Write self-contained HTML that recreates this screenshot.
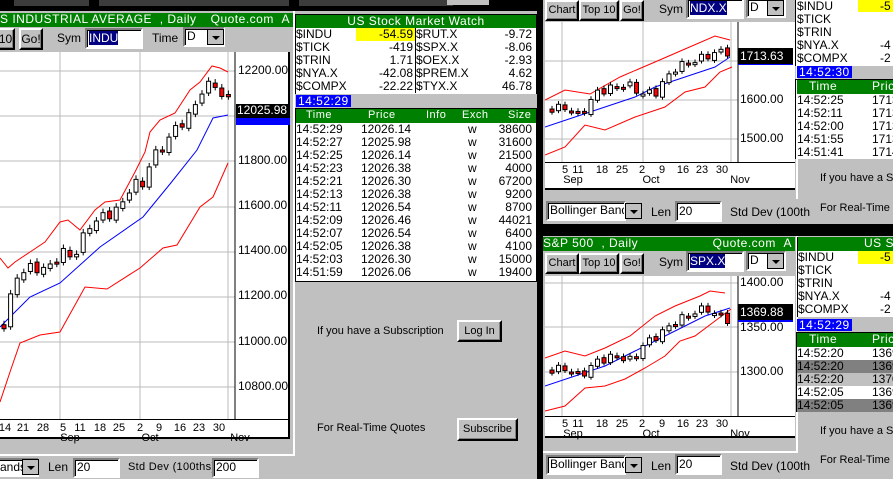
<!DOCTYPE html>
<html><head><meta charset="utf-8"><style>
*{margin:0;padding:0;box-sizing:border-box}
html{width:893px;height:479px;overflow:hidden}
body{width:893px;height:479px;overflow:hidden;background:#c0c0c0;position:relative;font-family:"Liberation Sans",sans-serif;font-size:11px;color:#000}
.a{position:absolute;white-space:nowrap;line-height:13px}
.g{position:absolute;background:#008000;color:#fff;line-height:13px;font-size:12px;letter-spacing:.5px;white-space:nowrap}
.btn{position:absolute;background:#c0c0c0;border:2px solid;border-color:#fff #000 #000 #fff;box-shadow:inset -1px -1px #808080;text-align:center;font-size:11px;white-space:nowrap;overflow:hidden}
.in{position:absolute;background:#fff;border:2px solid;border-color:#808080 #fff #fff #808080;box-shadow:inset 1px 1px #000;font-size:12px;padding-left:2px;white-space:nowrap;overflow:hidden}
.sel{position:absolute;background:#c0c0c0;border:1px solid #000;width:17px;height:16px}
.sel:after{content:"";position:absolute;left:4px;top:6px;border:4px solid transparent;border-top:4px solid #000}
.wh{position:absolute;background:#fff}
.hl{background:#000080;color:#fff}
.tb{position:absolute;background:#0000ff;color:#fff;font-size:12px;line-height:12px;padding:0 2px;letter-spacing:.5px;white-space:nowrap}
.d{position:absolute;width:20px;margin-left:-10px;text-align:center;line-height:11px}
</style></head><body>
<!-- top strip -->
<div class="a" style="left:0;top:0;width:537px;height:11px;background:#000"></div>
<div class="a" style="left:14px;top:0;width:75px;height:6px;background:#3c3c3c"></div>
<div class="a" style="left:99px;top:0;width:190px;height:6px;background:#3c3c3c"></div>
<div class="a" style="left:299px;top:0;width:154px;height:6px;background:#3c3c3c"></div>
<div class="a" style="left:447px;top:0;width:42px;height:5px;background:#c0c0c0"></div>

<!-- LEFT WINDOW -->
<div class="g" style="left:0;top:13px;width:293px;height:14px">S INDUSTRIAL AVERAGE &nbsp;, Daily<span style="position:absolute;right:3px">Quote.com &nbsp;A</span></div>
<div class="btn" style="left:-4px;top:28px;width:19px;height:22px;line-height:18px;font-size:12px">10</div>
<div class="btn" style="left:19px;top:28px;width:24px;height:22px;line-height:18px;font-size:12px">Go!</div>
<div class="a" style="left:57px;top:32px;font-size:12px">Sym</div>
<div class="in" style="left:85px;top:28px;width:58px;height:21px;line-height:16px"><span class="hl">INDU</span></div>
<div class="a" style="left:152px;top:32px;font-size:12px">Time</div>
<div class="in" style="left:183px;top:27px;width:42px;height:20px;line-height:15px">D</div>
<div class="sel" style="left:207px;top:29px"></div>
<div class="wh" style="left:0;top:52px;width:290px;height:387px;border-bottom:2px solid #000;border-right:2px solid #000"></div>
<div class="a" style="left:293px;top:11px;width:2px;height:445px;background:#fff"></div>
<div class="a" style="left:0;top:454px;width:295px;height:2px;background:#fff"></div>
<svg class="a" id="c1" style="left:0;top:52px" width="290" height="367"></svg>
<div class="a" style="left:238px;top:64px;font-size:12px">12200.00</div>
<div class="a" style="left:238px;top:154px;font-size:12px">11800.00</div>
<div class="a" style="left:238px;top:199px;font-size:12px">11600.00</div>
<div class="a" style="left:238px;top:244px;font-size:12px">11400.00</div>
<div class="a" style="left:238px;top:289px;font-size:12px">11200.00</div>
<div class="a" style="left:238px;top:335px;font-size:12px">11000.00</div>
<div class="a" style="left:238px;top:380px;font-size:12px">10800.00</div>
<div class="a" style="left:236px;top:104px;width:54px;height:14px;background:#000;color:#fff;font-size:12px;padding-left:1px">12025.98</div>
<div class="a" style="left:236px;top:118px;width:54px;height:7px;background:#0000ff"></div>
<div class="a" style="left:0;top:419px;width:290px;height:1px;background:#000"></div>
<div id="d1"></div>
<div class="in" style="left:-4px;top:458px;width:43px;height:19px;line-height:14px">ands</div>
<div class="sel" style="left:22px;top:459px"></div>
<div class="a" style="left:48px;top:461px;font-size:12px">Len</div>
<div class="in" style="left:73px;top:458px;width:47px;height:20px;line-height:15px">20</div>
<div class="a" style="left:128px;top:461px;font-size:11px;letter-spacing:.3px">Std Dev (100ths)</div>
<div class="in" style="left:212px;top:458px;width:47px;height:20px;line-height:15px">200</div>

<!-- MIDDLE PANEL -->
<div class="a" style="left:295px;top:14px;width:242px;height:268px;border:1px solid #000;background:#fff"></div>
<div class="g" style="left:296px;top:15px;width:240px;height:13px;text-align:center">US Stock Market Watch</div>
<div class="a" style="left:356px;top:28px;width:59px;height:13px;background:#ff0"></div>
<div class="a" style="left:415px;top:28px;width:1px;height:65px;background:#000"></div>
<div class="a" style="left:296px;top:28px;width:240px;line-height:13px;font-size:12px">
<div style="position:relative;height:13px">$INDU<span style="position:absolute;right:123px">-54.59</span><span style="position:absolute;left:120px">$RUT.X</span><span style="position:absolute;right:4px">-9.72</span></div>
<div style="position:relative;height:13px">$TICK<span style="position:absolute;right:123px">-419</span><span style="position:absolute;left:120px">$SPX.X</span><span style="position:absolute;right:4px">-8.06</span></div>
<div style="position:relative;height:13px">$TRIN<span style="position:absolute;right:123px">1.71</span><span style="position:absolute;left:120px">$OEX.X</span><span style="position:absolute;right:4px">-2.93</span></div>
<div style="position:relative;height:13px">$NYA.X<span style="position:absolute;right:123px">-42.08</span><span style="position:absolute;left:120px">$PREM.X</span><span style="position:absolute;right:4px">4.62</span></div>
<div style="position:relative;height:13px">$COMPX<span style="position:absolute;right:123px">-22.22</span><span style="position:absolute;left:120px">$TYX.X</span><span style="position:absolute;right:4px">46.78</span></div>
</div>
<div class="a" style="left:295px;top:94px;width:242px;height:14px;background:#c0c0c0"></div>
<div class="tb" style="left:296px;top:95px;height:12px">14:52:29</div>
<div class="a" style="left:295px;top:108px;width:242px;height:1px;background:#000"></div>
<div class="g" style="left:296px;top:109px;width:240px;height:14px;font-size:11px"><span style="position:absolute;left:10px">Time</span><span style="position:absolute;left:72px">Price</span><span style="position:absolute;left:130px">Info</span><span style="position:absolute;left:166px">Exch</span><span style="position:absolute;left:212px">Size</span></div>
<div id="trades" class="a" style="left:296px;top:123px;width:240px;font-size:12px"></div>

<div class="a" style="left:317px;top:325px">If you have a Subscription</div>
<div class="btn" style="left:457px;top:320px;width:45px;height:22px;line-height:18px">Log In</div>
<div class="a" style="left:317px;top:422px">For Real-Time Quotes</div>
<div class="btn" style="left:457px;top:418px;width:61px;height:23px;line-height:19px">Subscribe</div>

<!-- separator -->
<div class="a" style="left:537px;top:0;width:6px;height:479px;background:#000"></div>
<div class="a" style="left:543px;top:224px;width:350px;height:12px;background:#000"></div>

<!-- RIGHT TOP WINDOW -->
<div class="btn" style="left:545px;top:0;width:34px;height:21px;line-height:17px">Chart</div>
<div class="btn" style="left:579px;top:0;width:40px;height:21px;line-height:17px">Top 10</div>
<div class="btn" style="left:620px;top:0;width:24px;height:21px;line-height:17px">Go!</div>
<div class="a" style="left:659px;top:3px;font-size:12px">Sym</div>
<div class="in" style="left:686px;top:-2px;width:58px;height:21px;line-height:16px"><span class="hl">NDX.X</span></div>
<div class="in" style="left:746px;top:-2px;width:40px;height:20px;line-height:15px">D</div>
<div class="sel" style="left:767px;top:0"></div>
<div class="wh" style="left:545px;top:22px;width:250px;height:168px;border-bottom:2px solid #000"></div>
<svg class="a" id="c2" style="left:545px;top:22px" width="250" height="140"></svg>
<div class="a" style="left:740px;top:93px;font-size:12px">1600.00</div>
<div class="a" style="left:740px;top:132px;font-size:12px">1500.00</div>
<div class="a" style="left:738px;top:48px;width:55px;height:16px;background:#000;color:#fff;font-size:12px;line-height:16px;padding-left:2px">1713.63</div>
<div class="a" style="left:738px;top:64px;width:55px;height:1px;background:#0000ff"></div>
<div class="a" style="left:545px;top:162px;width:250px;height:1px;background:#000"></div>
<div id="d2"></div>
<div class="a" style="left:796px;top:0;width:2px;height:199px;background:#fff"></div>
<div class="in" style="left:546px;top:201px;width:80px;height:20px;line-height:15px">Bollinger Bands</div>
<div class="sel" style="left:625px;top:203px"></div>
<div class="a" style="left:651px;top:206px;font-size:12px">Len</div>
<div class="in" style="left:675px;top:201px;width:47px;height:21px;line-height:16px">20</div>
<div class="a" style="left:730px;top:206px;font-size:12px">Std Dev (100th</div>

<!-- RIGHT TOP COLUMN -->
<div class="a" style="left:795px;top:0;width:98px;height:66px;background:#fff;border-left:1px solid #000"></div>
<div class="a" style="left:858px;top:0;width:35px;height:12px;background:#ff0"></div>
<div class="a" style="left:797px;top:0;font-size:12px;line-height:13px">$INDU<br>$TICK<br>$TRIN<br>$NYA.X<br>$COMPX</div>
<div class="a" style="left:880px;top:0;font-size:12px;line-height:13px">-5<br><br><br>-4<br>-2</div>
<div class="tb" style="left:797px;top:66px;height:12px">14:52:30</div>
<div class="a" style="left:795px;top:79px;width:98px;height:80px;background:#fff;border-left:1px solid #000;border-top:1px solid #000"></div>
<div class="g" style="left:797px;top:80px;width:96px;height:14px;font-size:12px"><span style="position:absolute;left:12px">Time</span><span style="position:absolute;left:75px">Price</span></div>
<div class="a" style="left:797px;top:94px;font-size:12px;line-height:13px">14:52:25<br>14:52:11<br>14:52:00<br>14:51:55<br>14:51:41</div>
<div class="a" style="left:872px;top:94px;font-size:12px;line-height:13px">1713<br>1713<br>1713<br>1713<br>1714</div>
<div class="a" style="left:820px;top:172px">If you have a Su</div>
<div class="a" style="left:820px;top:202px">For Real-Time C</div>

<!-- RIGHT BOTTOM WINDOW -->
<div class="g" style="left:543px;top:237px;width:252px;height:14px">S&amp;P 500 &nbsp;, Daily<span style="position:absolute;right:3px">Quote.com &nbsp;A</span></div>
<div class="btn" style="left:545px;top:253px;width:34px;height:21px;line-height:17px">Chart</div>
<div class="btn" style="left:579px;top:253px;width:40px;height:21px;line-height:17px">Top 10</div>
<div class="btn" style="left:620px;top:253px;width:24px;height:21px;line-height:17px">Go!</div>
<div class="a" style="left:659px;top:256px;font-size:12px">Sym</div>
<div class="in" style="left:686px;top:251px;width:58px;height:21px;line-height:16px"><span class="hl">SPX.X</span></div>
<div class="in" style="left:746px;top:251px;width:40px;height:20px;line-height:15px">D</div>
<div class="sel" style="left:767px;top:253px"></div>
<div class="wh" style="left:545px;top:276px;width:250px;height:162px;border-bottom:2px solid #000"></div>
<svg class="a" id="c3" style="left:545px;top:276px" width="250" height="140"></svg>
<div class="a" style="left:740px;top:276px;font-size:12px">1400.00</div>
<div class="a" style="left:740px;top:321px;font-size:12px">1350.00</div>
<div class="a" style="left:740px;top:365px;font-size:12px">1300.00</div>
<div class="a" style="left:738px;top:304px;width:55px;height:16px;background:#000;color:#fff;font-size:12px;line-height:16px;padding-left:2px">1369.88</div>
<div class="a" style="left:738px;top:320px;width:55px;height:2px;background:#0000ff"></div>
<div class="a" style="left:545px;top:416px;width:250px;height:1px;background:#000"></div>
<div id="d3"></div>
<div class="a" style="left:796px;top:236px;width:2px;height:217px;background:#fff"></div>
<div class="a" style="left:543px;top:451px;width:255px;height:2px;background:#fff"></div>
<div class="in" style="left:546px;top:455px;width:80px;height:20px;line-height:15px">Bollinger Bands</div>
<div class="sel" style="left:625px;top:457px"></div>
<div class="a" style="left:651px;top:460px;font-size:12px">Len</div>
<div class="in" style="left:675px;top:454px;width:47px;height:21px;line-height:16px">20</div>
<div class="a" style="left:730px;top:460px;font-size:12px">Std Dev (100th</div>

<!-- RIGHT BOTTOM COLUMN -->
<div class="a" style="left:797px;top:237px;width:96px;height:80px;background:#fff;border-left:1px solid #000"></div>
<div class="g" style="left:798px;top:237px;width:95px;height:14px"><span style="position:absolute;left:66px">US St</span></div>
<div class="a" style="left:858px;top:251px;width:35px;height:13px;background:#ff0"></div>
<div class="a" style="left:798px;top:251px;font-size:12px;line-height:13px">$INDU<br>$TICK<br>$TRIN<br>$NYA.X<br>$COMPX</div>
<div class="a" style="left:880px;top:251px;font-size:12px;line-height:13px">-5<br><br><br>-4<br>-2</div>
<div class="tb" style="left:797px;top:319px;height:12px">14:52:29</div>
<div class="a" style="left:796px;top:332px;width:97px;height:80px;background:#fff;border-left:1px solid #000;border-top:1px solid #000"></div>
<div class="g" style="left:797px;top:333px;width:96px;height:14px;font-size:12px"><span style="position:absolute;left:12px">Time</span><span style="position:absolute;left:75px">Price</span></div>
<div class="a" style="left:797px;top:360px;width:96px;height:13px;background:#808080"></div>
<div class="a" style="left:797px;top:373px;width:96px;height:13px;background:#c0c0c0"></div>
<div class="a" style="left:797px;top:399px;width:96px;height:13px;background:#808080"></div>
<div class="a" style="left:797px;top:347px;font-size:12px;line-height:13px">14:52:20<br>14:52:20<br>14:52:20<br>14:52:05<br>14:52:05</div>
<div class="a" style="left:872px;top:347px;font-size:12px;line-height:13px">1369<br>1369<br>1370<br>1369<br>1369</div>
<div class="a" style="left:820px;top:425px">If you have a Su</div>
<div class="a" style="left:820px;top:454px">For Real-Time C</div>

<script>
var tr=[["14:52:29","12026.14","38600"],["14:52:27","12025.98","31600"],["14:52:25","12026.14","21500"],["14:52:23","12026.38","4000"],["14:52:21","12026.30","67200"],["14:52:13","12026.38","9200"],["14:52:11","12026.54","8700"],["14:52:09","12026.46","44021"],["14:52:07","12026.54","6400"],["14:52:05","12026.38","4100"],["14:52:03","12026.30","15000"],["14:51:59","12026.06","19400"]];
var h="";tr.forEach(function(r){h+='<div style="position:relative;height:13px;line-height:13px">'+r[0]+'<span style="position:absolute;left:65px">'+r[1]+'</span><span style="position:absolute;left:172px">w</span><span style="position:absolute;right:4px">'+r[2]+'</span></div>'});
document.getElementById("trades").innerHTML=h;
function dates(id,xs,labs,y,mon){var s="";xs.forEach(function(x,i){s+='<div class="d" style="left:'+x+'px;top:'+y+'px">'+labs[i]+'</div>'});
 mon.forEach(function(m){s+='<div class="d" style="left:'+m[1]+'px;top:'+(y+10)+'px">'+m[0]+'</div>'});document.getElementById(id).innerHTML=s;}
dates("d1",[5,23,43,63,80,100,119,140,159,180,199,219],["14","21","28","5","11","18","25","2","9","16","23","30"],423,[["Sep",70],["Oct",150],["Nov",240]]);
var rx=[565,578,602,622,642,662,683,702,722],rl=["5","11","18","25","2","9","16","23","30"];
dates("d2",rx,rl,165,[["Sep",573],["Oct",651],["Nov",740]]);
dates("d3",rx,rl,419,[["Sep",573],["Oct",651],["Nov",740]]);
function itp(p,x){if(x<=p[0][0])return p[0][1];for(var i=1;i<p.length;i++){if(x<=p[i][0]){var a=p[i-1],b=p[i];return a[1]+(b[1]-a[1])*(x-a[0])/(b[0]-a[0]);}}return p[p.length-1][1];}
function line(p,c){return '<polyline fill="none" stroke="'+c+'" stroke-width="1" points="'+p.map(function(q){return q.join(",")}).join(" ")+'"/>';}
function chart(id,o){
 var s="";
 o.vg.forEach(function(x){s+='<line x1="'+x+'" y1="0" x2="'+x+'" y2="'+o.h+'" stroke="#bbb"/>'});
 o.hg.forEach(function(y){s+='<line x1="0" y1="'+y+'" x2="'+o.ax+'" y2="'+y+'" stroke="#bbb"/>'});
 s+='<line x1="'+o.ax+'" y1="0" x2="'+o.ax+'" y2="'+o.h+'" stroke="#000"/>';
 s+=line(o.up,"#f00")+line(o.lo,"#f00")+line(o.mid,"#00f");
 var prev=itp(o.c,o.x0),k=0;
 for(var x=o.x0;x<=o.x1;x+=o.st){k++;var c=itp(o.c,x)+Math.sin(k*2.3)*o.n;var op=prev+Math.cos(k*1.7)*o.n*0.4;
  var t=Math.min(c,op),b=Math.max(c,op);if(b-t<2)b=t+2;var red=c>op;
  s+='<line x1="'+(x+2)+'" y1="'+(t-o.n*0.8)+'" x2="'+(x+2)+'" y2="'+(b+o.n*0.6)+'" stroke="#000"/>';
  s+='<rect x="'+x+'" y="'+t+'" width="4" height="'+(b-t)+'" fill="'+(red?"#f00":"#fff")+'" stroke="#000"/>';prev=c;}
 document.getElementById(id).innerHTML=s;}
chart("c1",{h:367,ax:235,vg:[60,140,228],hg:[19,64,109,155,200,245,290,335],x0:2,x1:228,st:6.6,n:5,
 c:[[0,275],[5,270],[12,225],[30,215],[45,218],[60,200],[70,205],[78,195],[85,175],[100,165],[112,160],[122,150],[130,130],[140,135],[148,110],[160,95],[175,75],[190,61],[200,38],[212,31],[218,41],[228,51]],
 up:[[0,206],[8,216],[15,210],[30,200],[45,190],[60,170],[68,168],[80,178],[95,158],[105,150],[120,148],[135,120],[145,100],[150,80],[160,68],[175,61],[190,38],[200,30],[212,14],[220,16],[228,20]],
 mid:[[0,275],[10,265],[30,245],[60,231],[100,195],[143,165],[170,132],[197,98],[213,66],[228,63]],
 lo:[[0,350],[10,320],[20,291],[40,283],[60,280],[85,235],[107,237],[140,216],[163,196],[177,193],[200,155],[213,145],[228,111]]});
chart("c2",{h:140,ax:193,vg:[17,98,186],hg:[39,78,117],x0:5,x1:186,st:6.5,n:4,
 c:[[0,88],[20,85],[30,95],[40,85],[50,70],[80,62],[95,72],[110,70],[120,55],[130,45],[150,38],[170,30],[185,30]],
 up:[[0,78],[20,68],[45,72],[75,55],[110,40],[140,27],[170,14],[185,18]],
 mid:[[0,105],[30,95],[60,85],[90,75],[110,65],[140,55],[170,45],[185,35]],
 lo:[[0,133],[20,125],[40,103],[60,108],[90,95],[120,85],[140,70],[160,65],[175,50],[187,45]]});
chart("c3",{h:140,ax:193,vg:[17,98,186],hg:[7,51,96],x0:5,x1:186,st:6.5,n:4,
 c:[[0,95],[20,92],[30,100],[40,95],[50,85],[70,80],[85,85],[95,70],[110,60],[130,45],[145,37],[160,32],[170,40],[185,45]],
 up:[[0,82],[20,75],[40,80],[60,72],[85,60],[110,40],[130,30],[155,20],[165,15],[180,17]],
 mid:[[0,110],[30,100],[60,90],[90,75],[110,65],[130,55],[160,40],[185,32]],
 lo:[[0,135],[20,130],[40,112],[60,110],[80,103],[100,92],[120,80],[135,65],[150,60],[170,45],[186,33]]});
</script>
</body></html>
